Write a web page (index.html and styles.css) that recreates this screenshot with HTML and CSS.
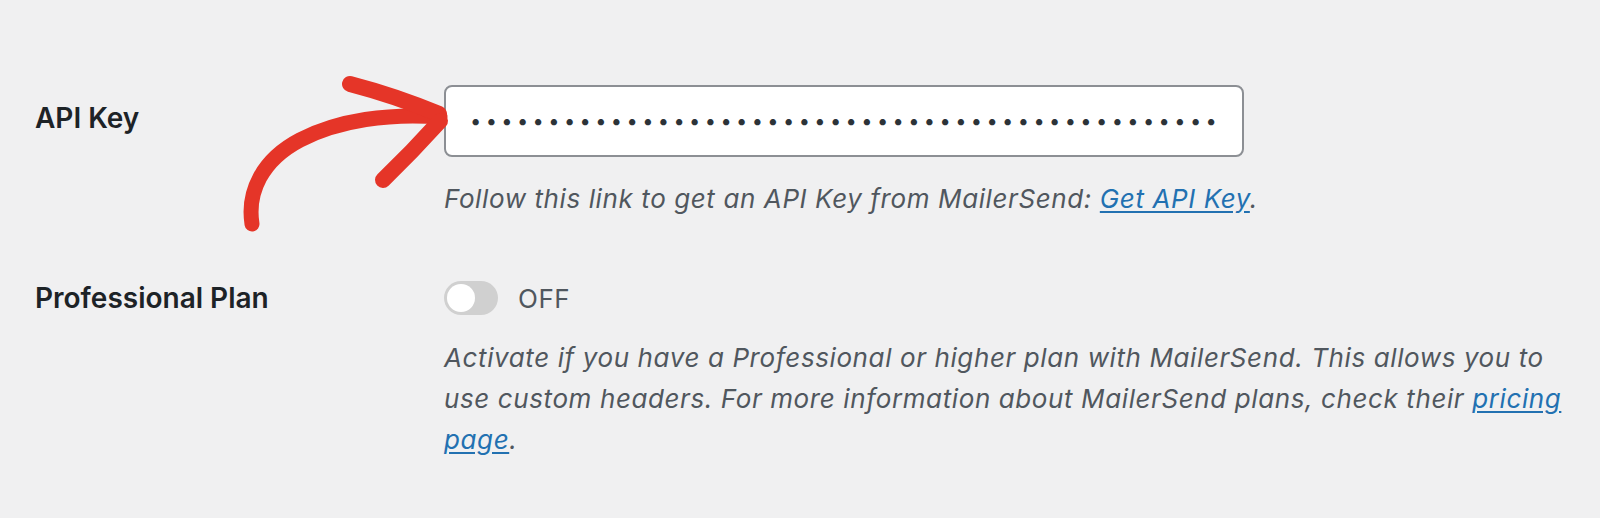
FILE: index.html
```html
<!DOCTYPE html>
<html lang="en">
<head>
<meta charset="utf-8">
<title>MailerSend settings</title>
<link rel="stylesheet" href="styles.css">
</head>
<body>
<div class="settings">
  <div class="row row-api">
    <label class="row-label" for="api-key">API Key</label>
    <div class="row-field">
      <input id="api-key" class="text-input" type="password" value="0123456789012345678901234567890123456789012345678901234567" readonly>
      <p class="description">Follow this link to get an API Key from MailerSend: <a href="#">Get API Key</a>.</p>
    </div>
  </div>
  <div class="row row-plan">
    <div class="row-label">Professional Plan</div>
    <div class="row-field">
      <div class="toggle-line">
        <span class="toggle"><span class="knob"></span></span>
        <span class="toggle-text">OFF</span>
      </div>
      <p class="description">Activate if you have a Professional or higher plan with MailerSend. This allows you to use custom headers. For more information about MailerSend plans, check their <a href="#">pricing page</a>.</p>
    </div>
  </div>
</div>
<svg class="arrow" width="1600" height="518" viewBox="0 0 1600 518" aria-hidden="true">
  <path class="shaft" d="M252 224 C 247 192, 262 160, 300 140 S 390 113, 440 117" />
  <path class="head-top" d="M350 84 Q 396 96, 439 114" />
  <path class="head-bottom" d="M440 121 Q 412 152, 383 180" />
</svg>
</body>
</html>
```
FILE: styles.css
```css
html, body {
  margin: 0;
  padding: 0;
}
body {
  background: #f0f0f1;
  font-family: Inter, "Noto Sans", sans-serif;
  color: #1d2327;
  width: 1600px;
  height: 518px;
  overflow: hidden;
  position: relative;
}
.settings {
  padding: 85px 0 0 35px;
}
.row {
  display: grid;
  grid-template-columns: 409px 1130px;
}
.row-plan {
  margin-top: 61px;
}
.row-label {
  font-size: 28px;
  font-weight: 600;
  line-height: 36px;
  color: #1d2327;
}
.row-api .row-label {
  padding-top: 15px;
}
.text-input {
  box-sizing: border-box;
  display: block;
  width: 800px;
  height: 72px;
  margin: 0;
  padding: 0 24px;
  border: 2px solid #8c8f94;
  border-radius: 8px;
  background: #fff;
  color: #2c3338;
  font-family: Inter, "Noto Sans", sans-serif;
  font-size: 20px;
  letter-spacing: 4.4px;
  outline: none;
}
.description {
  margin: 21px 0 0;
  font-size: 26px;
  line-height: 41px;
  letter-spacing: 0.6px;
  font-style: italic;
  color: #50575e;
}
.row-plan .description {
  margin-top: 21px;
}
.description a {
  color: #2271b1;
  text-decoration: underline;
  text-underline-offset: 3px;
}
.toggle-line {
  display: flex;
  align-items: center;
  height: 36px;
}
.toggle {
  box-sizing: border-box;
  width: 54px;
  height: 34px;
  border-radius: 17px;
  background: #d0d0d0;
  padding: 3px;
  display: flex;
  align-items: center;
}
.knob {
  width: 28px;
  height: 28px;
  border-radius: 50%;
  background: #fff;
}
.toggle-text {
  margin-left: 20px;
  font-size: 26px;
  letter-spacing: 0.5px;
  color: #50575e;
}
.arrow {
  position: absolute;
  left: 0;
  top: 0;
  pointer-events: none;
}
.arrow path {
  fill: none;
  stroke: #e53528;
  stroke-linecap: round;
  stroke-linejoin: round;
}
.arrow .shaft {
  stroke-width: 15;
}
.arrow .head-top {
  stroke-width: 16;
}
.arrow .head-bottom {
  stroke-width: 16;
}
```
